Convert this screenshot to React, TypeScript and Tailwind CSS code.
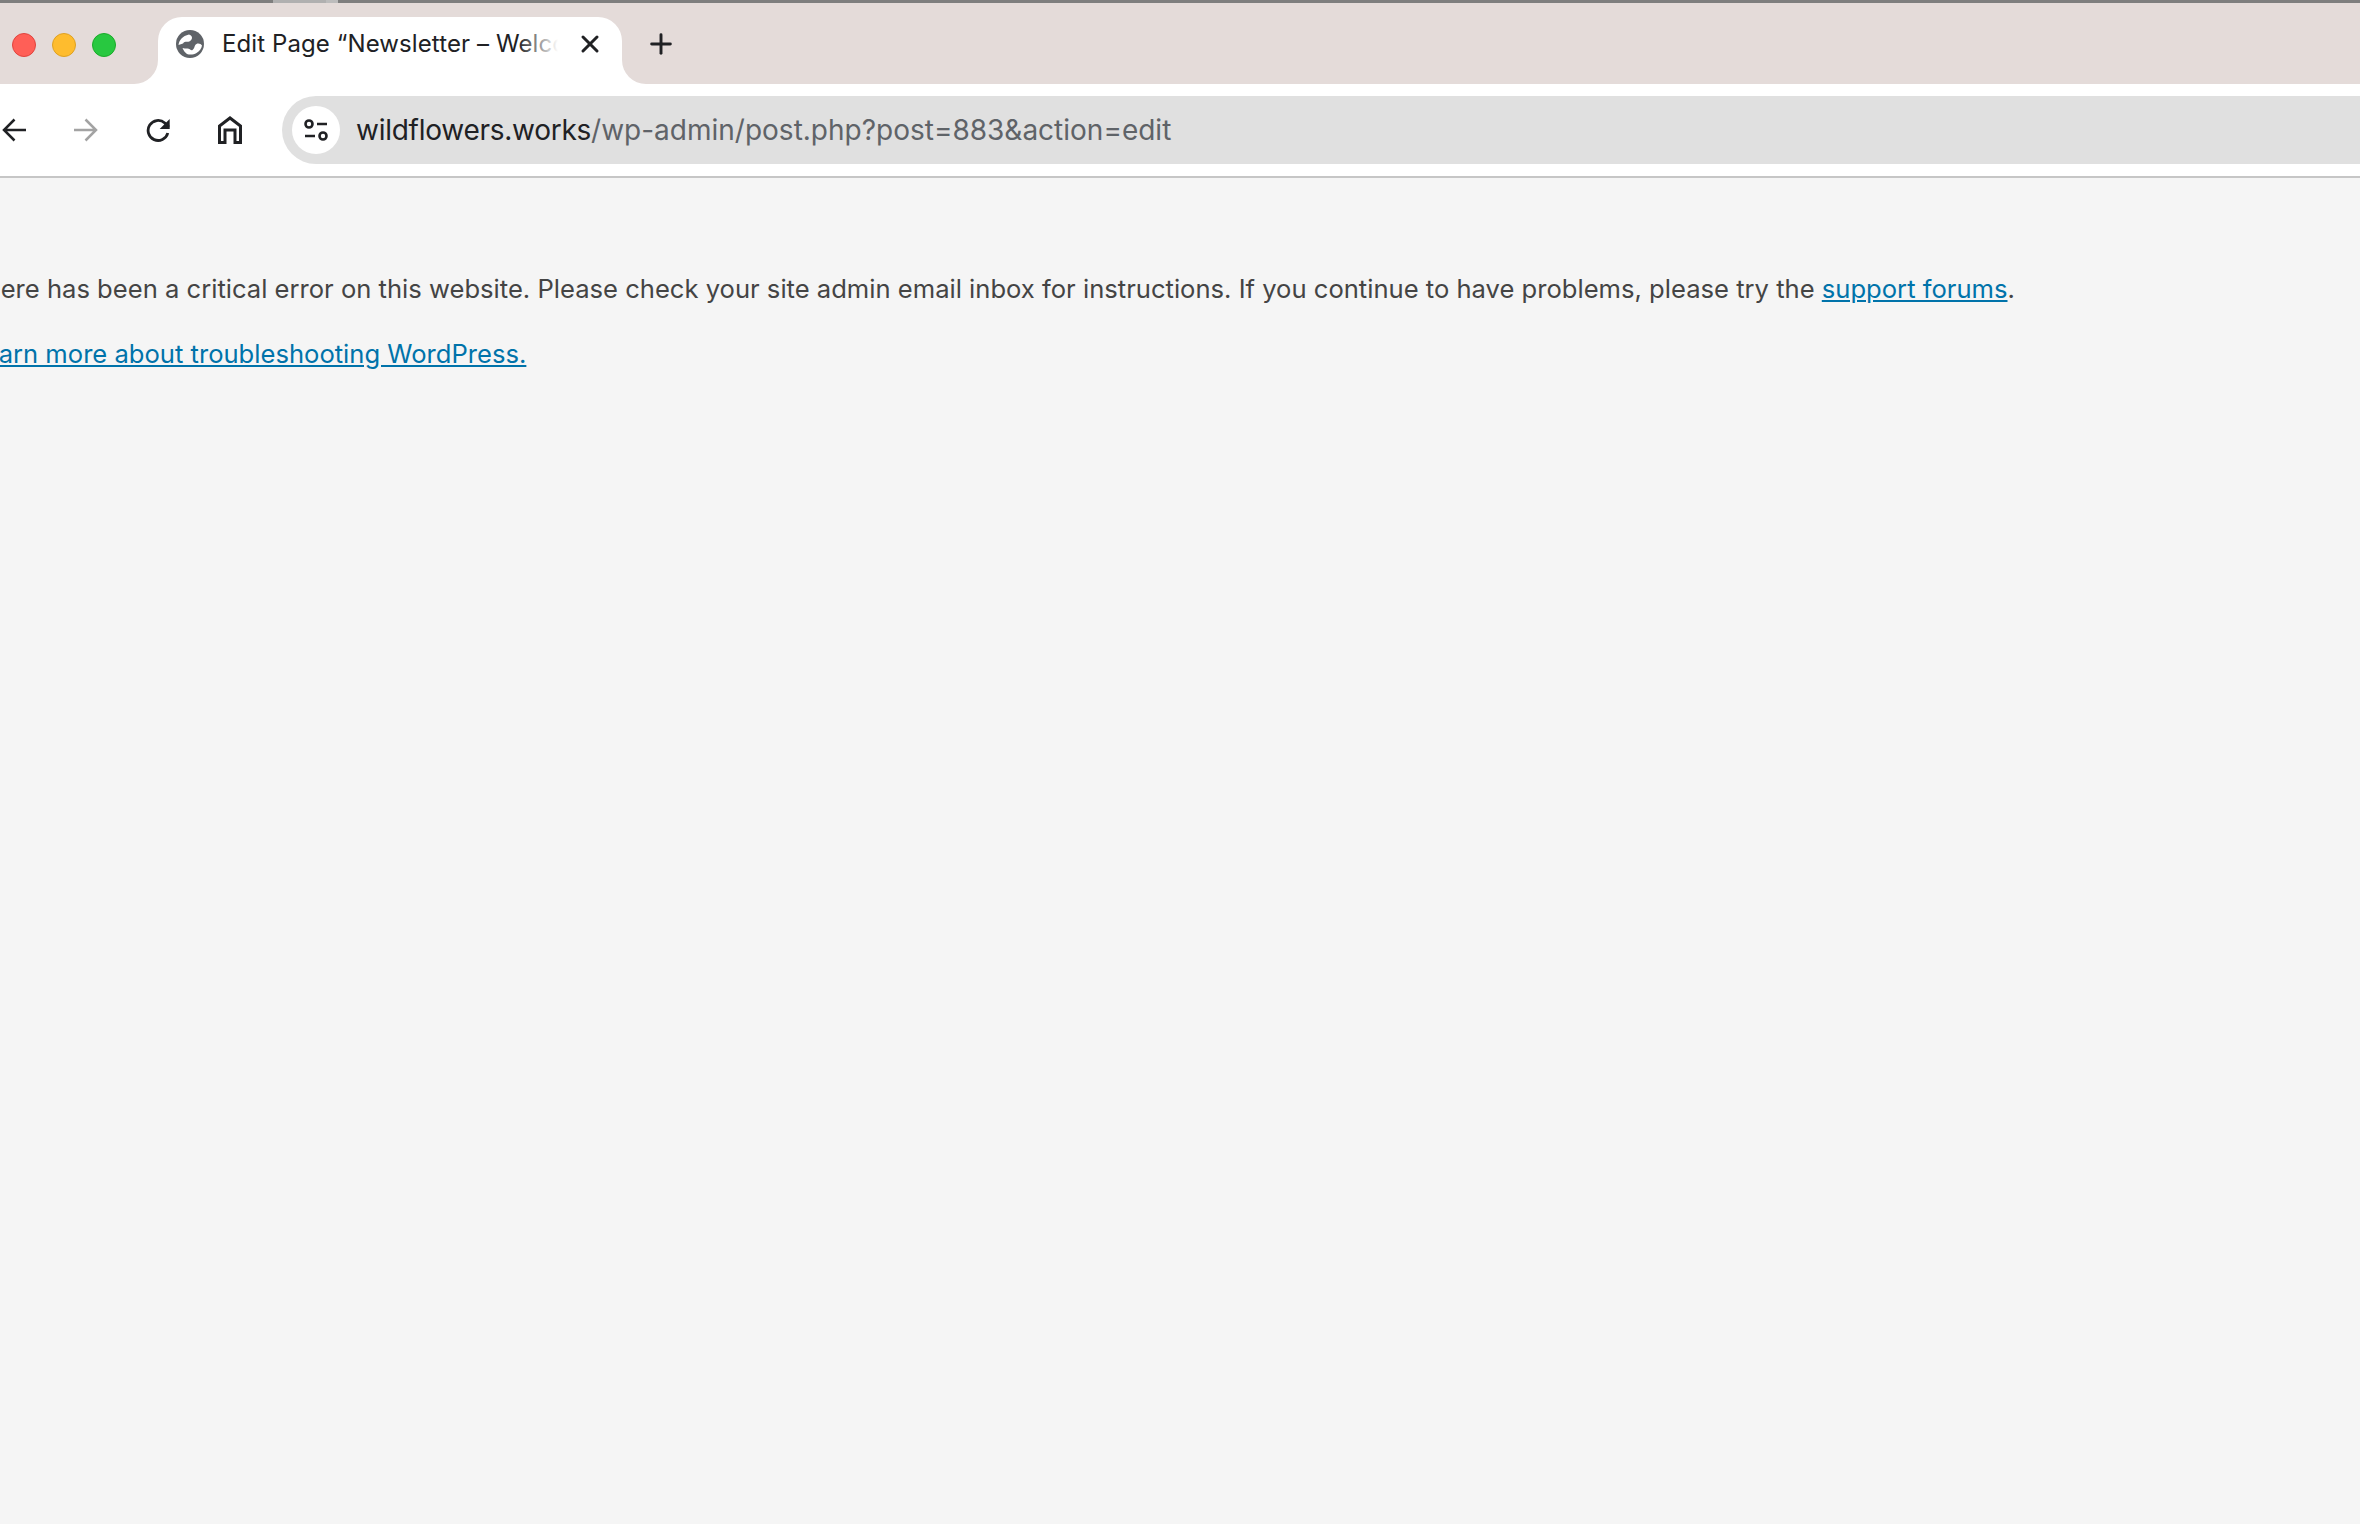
import { Plus, X } from 'lucide-react';

function Globe() {
  return (
    <svg viewBox="0 0 28 28" className="h-7 w-7 shrink-0">
      <circle cx="14" cy="14" r="14" fill="#5f6368" />
      <path d="M2.500 15C3 10 6.500 6 13 4.500c2.500.5 3.500 2.500 2.800 4.500-1 2-2.800 2.800-4.800 2.800-2 0-3 .2-4 1.700z" fill="#fff" />
      <path d="M26 15.500c-1-1.500-3.500-2.500-5.500-1.500-2.500 1.200-1.500 4.500-4 6-1.500.8-3-1.500-5-1.500-1.800 0-3.500 0-5-.5 1 2.500 2.500 4.500 4.500 6 3 1 6.500.8 9.500-1 3-2 5-4.500 5.500-7.500z" fill="#fff" />
    </svg>
  );
}

function BackIcon({ color, flip }: { color: string; flip?: boolean }) {
  return (
    <svg viewBox="0 0 24 24" className={`h-6 w-6 shrink-0 ${flip ? 'rotate-180' : ''}`} fill="none" stroke={color} strokeWidth="2.500">
      <path d="M24 12H2M12.500 1.500 2 12l10.500 10.500" />
    </svg>
  );
}

function ReloadIcon() {
  return (
    <svg viewBox="0 0 24 24" className="h-6 w-6 shrink-0" fill="none" stroke="#202124" strokeWidth="2.800">
      <path d="M21.800 15a10 10 0 1 1-3-10l4 4" />
      <path d="M23.700 1v10h-10z" fill="#202124" stroke="none" />
    </svg>
  );
}

function HomeIcon() {
  return (
    <svg viewBox="0 0 24 28" className="h-7 w-6 shrink-0" fill="none" stroke="#202124" strokeWidth="3">
      <path d="M1.500 26.500V10L12 2l10.500 8v16.500H17V14H7v12.500z" />
    </svg>
  );
}

function TuneIcon() {
  return (
    <svg viewBox="0 0 24 24" className="h-6 w-6" fill="none" stroke="#202124" strokeWidth="2.600">
      <circle cx="5" cy="6" r="3.500" />
      <path d="M13 6h10M1 18h10" />
      <circle cx="19" cy="18" r="3.500" />
    </svg>
  );
}

export default function App() {
  return (
    <div className="h-[1524px] w-[2360px] overflow-hidden bg-[#f5f5f5] font-['Inter',sans-serif]">
      <div className="flex h-[3px] bg-[#7e7e7e]">
        <div className="w-[273px]" />
        <div className="w-[53px] bg-[#b0b0b0]" />
        <div className="w-[12px] bg-[#bcbcbc]" />
      </div>

      <div className="flex h-[81px] items-end bg-[#e4dbd9]">
        <div className="flex h-[67px] w-[158px] shrink-0 items-center gap-4 pb-[11px] pl-3">
          <div className="h-6 w-6 rounded-full border border-[#e0443e] bg-[#ff5f57]" />
          <div className="h-6 w-6 rounded-full border border-[#dea123] bg-[#febc2e]" />
          <div className="h-6 w-6 rounded-full border border-[#1aab29] bg-[#28c840]" />
        </div>

        <div className="relative flex h-[67px] w-[464px] shrink-0 items-center rounded-t-[24px] bg-white pb-[13px] pl-[18px] pr-[18px]">
          <div className="absolute bottom-0 left-[-24px] h-6 w-6 bg-white">
            <div className="h-6 w-6 rounded-br-[24px] bg-[#e4dbd9]" />
          </div>
          <div className="absolute bottom-0 right-[-24px] h-6 w-6 bg-white">
            <div className="h-6 w-6 rounded-bl-[24px] bg-[#e4dbd9]" />
          </div>
          <Globe />
          <div className="relative ml-[18px] w-[336px] overflow-hidden whitespace-nowrap text-[24px] leading-8 tracking-[0.1px] text-[#202124]">
            Edit Page “Newsletter – Welcome
            <div className="absolute inset-y-0 right-0 w-[40px] bg-gradient-to-r from-transparent to-white" />
          </div>
          <X className="ml-auto h-7 w-7 text-[#202124]" strokeWidth={2.6} />
        </div>

        <div className="flex h-[67px] items-center pb-[13px] pl-[23px]">
          <Plus className="h-8 w-8 text-[#202124]" strokeWidth={2.2} />
        </div>
      </div>

      <div className="flex h-[94px] items-center border-b-2 border-[#c6c6c6] bg-white pl-[2px]">
        <div className="flex items-center gap-12">
          <BackIcon color="#202124" />
          <BackIcon color="#a3a3a3" flip />
          <ReloadIcon />
          <HomeIcon />
        </div>
        <div className="ml-10 flex h-[68px] flex-1 items-center rounded-l-[34px] bg-[#e0e0e0] pl-[10px]">
          <div className="flex h-12 w-12 items-center justify-center rounded-full bg-white">
            <TuneIcon />
          </div>
          <div className="ml-4 whitespace-nowrap text-[28px] text-[#5f6368]">
            <span className="tracking-[-0.26px] text-[#202124]">wildflowers.works</span>/wp-admin/post.php?post=883&amp;action=edit
          </div>
        </div>
      </div>

      <div className="ml-[-31px] pt-[91px] text-[25.6px] leading-[39px] text-[#444444]">
        <p>
          There has been a critical error on this website. Please check your site admin email inbox for instructions. If you continue to have problems, please try the{' '}
          <a href="#" className="text-[#0073aa] underline">support forums</a>.
        </p>
        <p className="mt-[26px]">
          <a href="#" className="text-[#0073aa] underline">Learn more about troubleshooting WordPress.</a>
        </p>
      </div>
    </div>
  );
}
